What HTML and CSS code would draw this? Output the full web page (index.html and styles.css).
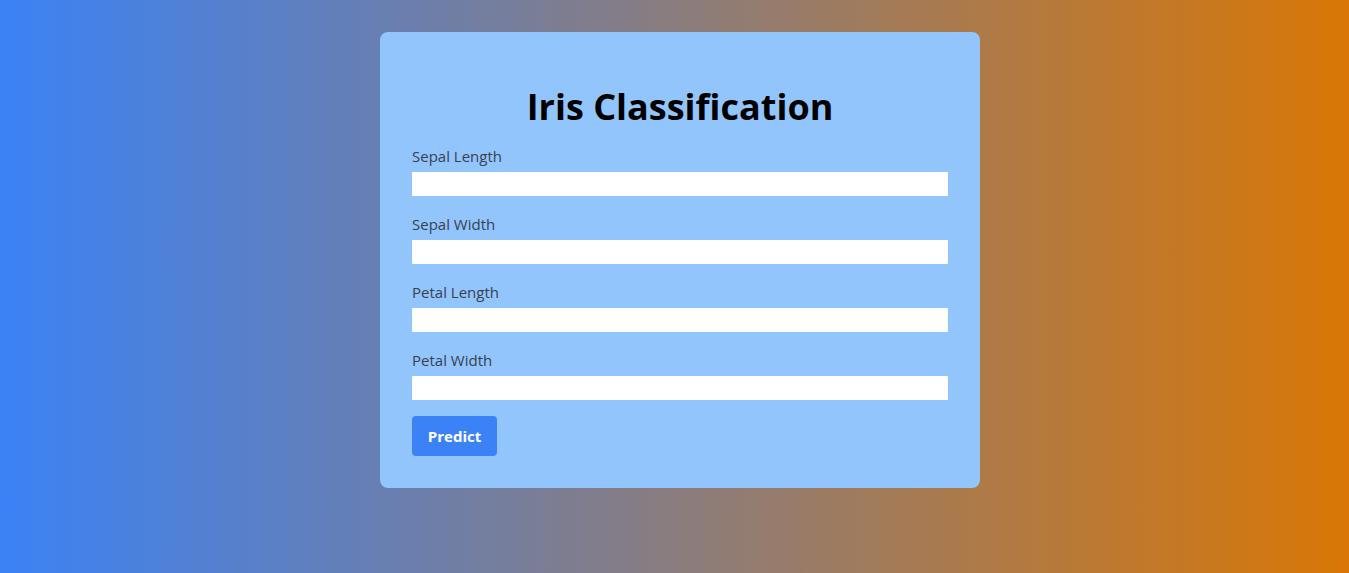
FILE: index.html
```html
<!DOCTYPE html>
<html lang="en">
<head>
<meta charset="utf-8">
<title>Iris Classification</title>
<link rel="stylesheet" href="styles.css">
</head>
<body>
<main class="page">
  <form class="card">
    <h1 class="title">Iris Classification</h1>
    <div class="field">
      <label class="label" for="sl">Sepal Length</label>
      <input class="input" id="sl" type="text">
    </div>
    <div class="field">
      <label class="label" for="sw">Sepal Width</label>
      <input class="input" id="sw" type="text">
    </div>
    <div class="field">
      <label class="label" for="pl">Petal Length</label>
      <input class="input" id="pl" type="text">
    </div>
    <div class="field">
      <label class="label" for="pw">Petal Width</label>
      <input class="input" id="pw" type="text">
    </div>
    <button class="btn" type="button">Predict</button>
  </form>
</main>
</body>
</html>
```
FILE: styles.css
```css
* { box-sizing: border-box; }
html, body { margin: 0; padding: 0; }
body {
  font-family: "Open Sans", "Noto Sans", sans-serif;
  background: linear-gradient(to right, #3b82f6, #d97706);
  min-height: 573px;
}
.page {
  display: flex;
  justify-content: center;
  padding-top: 32px;
  padding-left: 11px;
}
.card {
  width: 600px;
  background: #93c5fd;
  border-radius: 8px;
  padding: 32px;
  display: flex;
  flex-direction: column;
}
.title {
  margin: 23px 0 17px;
  font-size: 36px;
  line-height: 40px;
  font-weight: 700;
  text-align: center;
  color: #000;
}
.field {
  display: flex;
  flex-direction: column;
  gap: 4px;
  margin-bottom: 16px;
}
.label {
  font-size: 15px;
  line-height: 24px;
  color: #374151;
}
.input {
  height: 24px;
  border: none;
  background: #fff;
  padding: 0 8px;
  font: inherit;
}
.btn {
  align-self: flex-start;
  height: 40px;
  width: 85px;
  border: none;
  border-radius: 4px;
  background: #3b82f6;
  color: #fff;
  font-family: inherit;
  font-size: 15px;
  font-weight: 700;
  padding: 0;
}
```
